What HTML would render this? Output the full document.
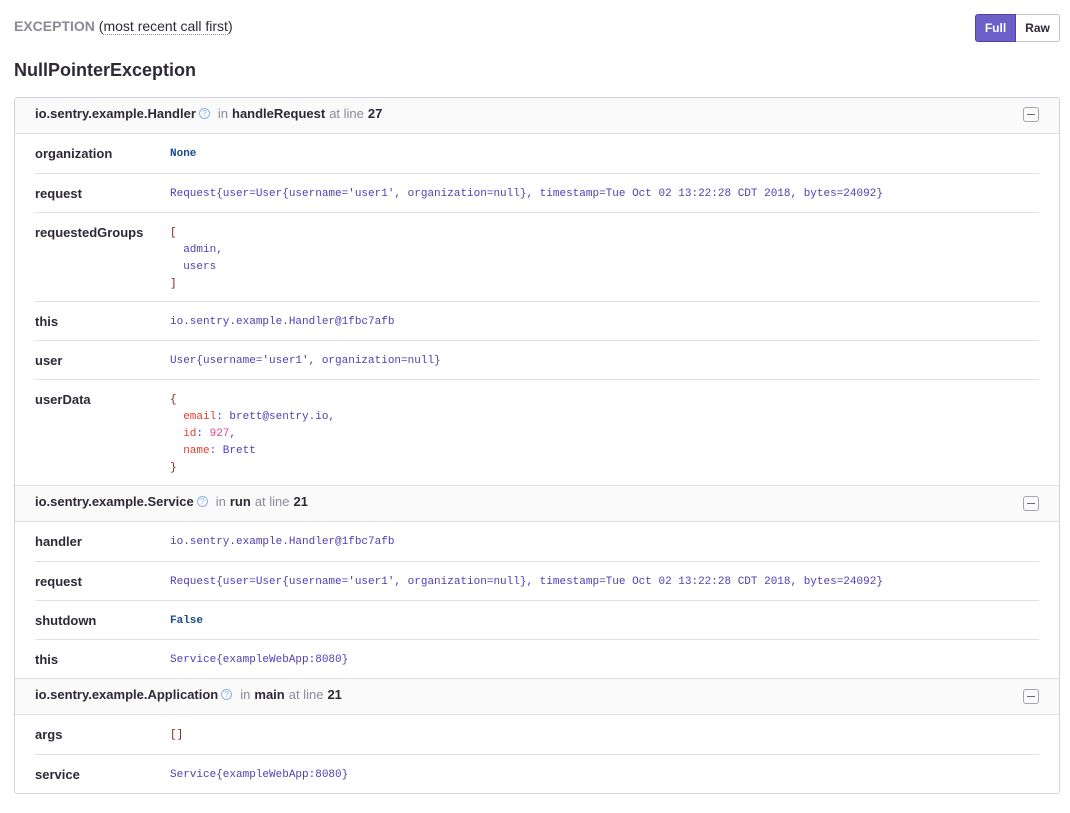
<!DOCTYPE html>
<html><head><style>
*{box-sizing:border-box;margin:0;padding:0}
body{width:1070px;height:813px;background:#fff;font-family:"Liberation Sans",sans-serif;color:#2f2936;position:relative}
.hdr{position:absolute;left:14px;top:18px;font-size:14px;color:#2f2936}
.hdr b{color:#8e8996;font-weight:bold}
.hdr u{text-decoration:none;border-bottom:1px dotted #9585a3}
.btns{position:absolute;left:975px;top:14px;display:flex;height:28px;font-size:12px;font-weight:bold}
.btns div{display:flex;align-items:center;justify-content:center;border:1px solid #c7c1d0}
.f{width:41px;background:#6c5fc7;color:#fff;border-color:#4f44a8 !important;border-radius:3px 0 0 3px}
.r{width:44px;color:#2f2936;border-left:0 !important;border-radius:0 3px 3px 0}
h1{position:absolute;left:14px;top:60px;font-size:18px;font-weight:bold}
.box{position:absolute;left:14px;top:97px;width:1046px;height:697px;border:1px solid #d6d0dd;border-radius:3px;overflow:hidden}
.fh{height:37px;background:#fafafa;border-bottom:1px solid #e2dee6;display:flex;align-items:flex-start;padding-top:8px;padding-left:20px;font-size:13px;position:relative}
.fh b{font-weight:bold}
.fh .g{color:#8e8996;margin:0 4px}
.q{display:inline-block;width:11px;height:11px;border:1px solid #8ab4e8;border-radius:50%;color:#8ab4e8;font-size:8px;line-height:9px;text-align:center;margin-left:3px;margin-right:4px;margin-top:2px}
.mn{position:absolute;right:20px;top:10px;width:16px;height:15px;border:1px solid #a9a2b3;border-radius:3px}
.mn:after{content:"";position:absolute;left:3px;right:3px;top:6px;height:1px;background:#6f6778}
.vars{margin:0 20px}
.row{display:flex;border-top:1px solid #e2dee6;min-height:39px;padding-top:12px}
.vars .row:first-child{border-top:0}
.k{width:135px;font-size:13px;font-weight:bold;color:#2f2936;padding-top:0}
.v{font-family:"Liberation Mono",monospace;font-size:11px;line-height:17px;color:#4e3fb4;white-space:pre}
.n{color:#1c4b8d;font-weight:bold}
.br{color:#7a1e1e}
.red{color:#e03e2f}
.pk{color:#e83e8c}
</style></head><body>
<div class="hdr"><b>EXCEPTION</b> (<u>most recent call first</u>)</div>
<div class="btns"><div class="f">Full</div><div class="r">Raw</div></div>
<h1>NullPointerException</h1>
<div class="box">
<div class="fh" style="height:36px;padding-top:8px"><b>io.sentry.example.Handler</b><span class="q">?</span><span class="g">in</span><b>handleRequest</b><span class="g">at line</span><b>27</b><div class="mn" style="top:9px"></div></div>
<div class="vars">
<div class="row" style="height:39px"><div class="k">organization</div><div class="v n">None</div></div>
<div class="row" style="height:39px"><div class="k">request</div><div class="v">Request{user=User{username='user1', organization=null}, timestamp=Tue Oct 02 13:22:28 CDT 2018, bytes=24092}</div></div>
<div class="row" style="height:89px"><div class="k">requestedGroups</div><div class="v"><span class="br">[</span>
  admin,
  users
<span class="br">]</span></div></div>
<div class="row" style="height:39px"><div class="k">this</div><div class="v">io.sentry.example.Handler@1fbc7afb</div></div>
<div class="row" style="height:39px"><div class="k">user</div><div class="v">User{username='user1', organization=null}</div></div>
<div class="row" style="height:106px"><div class="k">userData</div><div class="v"><span class="br">{</span>
  <span class="red">email</span>: brett@sentry.io,
  <span class="red">id</span>: <span class="pk">927</span>,
  <span class="red">name</span>: Brett
<span class="br">}</span></div></div>
</div>
<div class="fh" style="border-top:1px solid #e2dee6"><b>io.sentry.example.Service</b><span class="q">?</span><span class="g">in</span><b>run</b><span class="g">at line</span><b>21</b><div class="mn"></div></div>
<div class="vars">
<div class="row" style="height:39px"><div class="k">handler</div><div class="v">io.sentry.example.Handler@1fbc7afb</div></div>
<div class="row" style="height:39px"><div class="k">request</div><div class="v">Request{user=User{username='user1', organization=null}, timestamp=Tue Oct 02 13:22:28 CDT 2018, bytes=24092}</div></div>
<div class="row" style="height:39px"><div class="k">shutdown</div><div class="v n">False</div></div>
<div class="row" style="height:39px"><div class="k">this</div><div class="v">Service{exampleWebApp:8080}</div></div>
</div>
<div class="fh" style="border-top:1px solid #e2dee6"><b>io.sentry.example.Application</b><span class="q">?</span><span class="g">in</span><b>main</b><span class="g">at line</span><b>21</b><div class="mn"></div></div>
<div class="vars">
<div class="row" style="height:39px"><div class="k">args</div><div class="v br">[]</div></div>
<div class="row" style="height:39px"><div class="k">service</div><div class="v">Service{exampleWebApp:8080}</div></div>
</div>
</div>
</body></html>
